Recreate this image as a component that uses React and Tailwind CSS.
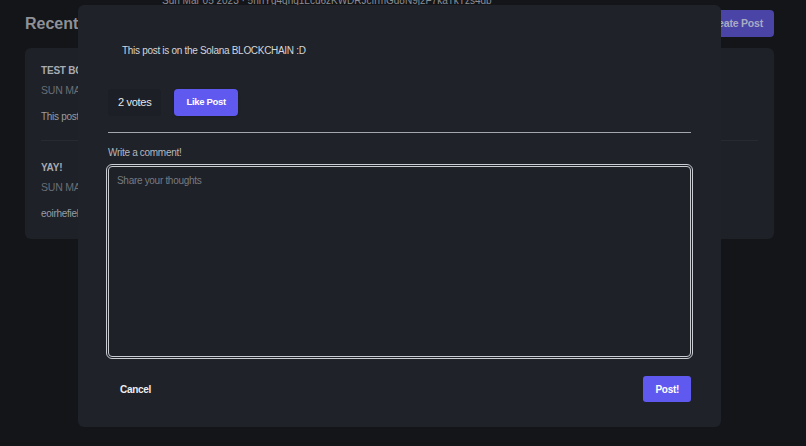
export default function App() {
  return (
    <div className="relative min-h-[446px] w-full overflow-hidden bg-[#141519] font-['Liberation_Sans',Arial,sans-serif]">
      {/* page behind the modal */}
      <div className="pl-[25px] pr-[32px] pt-[10px]">
        <div className="flex items-center justify-between">
          <h1 className="text-[16px] font-bold text-[#8e9197]">Recent Posts</h1>
          <button className="h-[27px] rounded-[4px] bg-[#4944a6] px-[11px] text-[10.5px] font-bold tracking-[-0.2px] text-[#a9abc4]">Create Post</button>
        </div>
        <div className="mt-[11px] rounded-[6px] bg-[#1e2128] px-[16px]">
          <div className="border-b border-[#262a31] pt-[15px] pb-[16px]">
            <div className="text-[10px] font-bold uppercase tracking-[-0.2px] text-[#a8abb1]">Test Bounty</div>
            <div className="mt-[5px] text-[10.5px] uppercase tracking-[-0.2px] text-[#6a6e75]">Sun Mar 05 2023</div>
            <div className="mt-[10px] text-[10px] tracking-[-0.3px] text-[#9a9da3]">This post is on the Solana BLOCKCHAIN :D</div>
          </div>
          <div className="pt-[19px] pb-[18px]">
            <div className="text-[10px] font-bold uppercase tracking-[-0.2px] text-[#a8abb1]">Yay!</div>
            <div className="mt-[5px] text-[10.5px] uppercase tracking-[-0.2px] text-[#6a6e75]">Sun Mar 05 2023</div>
            <div className="mt-[10px] text-[10px] tracking-[-0.3px] text-[#9a9da3]">eoirhefiehfoiehf</div>
          </div>
        </div>
      </div>

      {/* clipped line above the modal */}
      <div className="absolute left-[162px] top-[-7px] text-[10px] text-[#8a8d93]">
        Sun Mar 05 2023 · 5hnYg4qhq1Lcu6zKWDRJcfrmGd8N9j2F7kaTkTzs4db
      </div>

      {/* modal */}
      <div className="absolute left-[78px] top-[5px] flex h-[422px] w-[643px] flex-col rounded-[6px] bg-[#1f2229] px-[30px] pt-[38px]">
        <p className="pl-[14px] text-[10px] tracking-[-0.3px] text-[#d4d6da]">This post is on the Solana BLOCKCHAIN :D</p>
        <div className="mt-[31px] flex items-center gap-[13px]">
          <div className="flex h-[27px] items-center rounded-[4px] bg-[#1c1f25] px-[10px] text-[11px] tracking-[-0.3px] text-[#e6e7ea]">2 votes</div>
          <button className="h-[27px] rounded-[4px] bg-[#6059f0] px-[12px] text-[9.5px] font-bold tracking-[-0.3px] text-white shadow-sm">Like Post</button>
        </div>
        <hr className="mt-[16px] border-t border-[#a3a6ab]" />
        <label className="mt-[12px] text-[10px] tracking-[-0.3px] text-[#b5b8bd]">Write a comment!</label>
        <textarea
          placeholder="Share your thoughts"
          className="mt-[6px] h-[191px] w-full resize-none rounded-[4px] border border-[#c9ccd1] bg-[#1e2127] px-[8px] py-[6px] text-[10px] tracking-[-0.3px] text-[#d4d6da] outline outline-1 outline-offset-[1px] outline-[#c9ccd1] placeholder:text-[#777b82]"
        />
        <div className="mt-[19px] flex items-center justify-between">
          <button className="px-[12px] text-[10px] font-bold tracking-[-0.3px] text-[#eceef0]">Cancel</button>
          <button className="h-[26px] rounded-[3px] bg-[#6059f0] px-[12px] text-[10px] font-bold tracking-[-0.3px] text-white">Post!</button>
        </div>
      </div>
    </div>
  );
}
